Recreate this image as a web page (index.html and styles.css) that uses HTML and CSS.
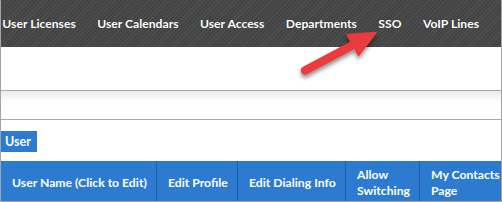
FILE: index.html
```html
<!DOCTYPE html>
<html>
<head>
<meta charset="utf-8">
<link rel="stylesheet" href="styles.css">
</head>
<body>
<div class="page">
  <div class="topbar">
    <nav class="nav">
      <span class="nav-item">Manage User Licenses</span>
      <span class="nav-item">User Calendars</span>
      <span class="nav-item">User Access</span>
      <span class="nav-item">Departments</span>
      <span class="nav-item">SSO</span>
      <span class="nav-item">VoIP Lines</span>
    </nav>
  </div>
  <div class="band"></div>
  <div class="band-shade"></div>
  <div class="content">
    <div class="tab">User</div>
    <div class="thead">
      <div class="th c1">User Name (Click to Edit)</div>
      <div class="th c2">Edit Profile</div>
      <div class="th c3">Edit Dialing Info</div>
      <div class="th c4">Allow<br>Switching</div>
      <div class="th c5">My Contacts<br>Page</div>
    </div>
  </div>
  <svg class="arrow" width="502" height="202" viewBox="0 0 502 202">
    <defs>
      <filter id="sh" x="-20%" y="-20%" width="140%" height="160%">
        <feDropShadow dx="0" dy="3" stdDeviation="2.2" flood-color="#000" flood-opacity="0.45"/>
      </filter>
    </defs>
    <g filter="url(#sh)" fill="#ea3a3e" stroke="#ea3a3e">
      <line x1="305" y1="70.5" x2="356" y2="43.5" stroke-width="8.5" stroke-linecap="round"/>
      <polygon points="376,32.5 358.5,55.5 347,34.5" stroke-width="1.5" stroke-linejoin="round"/>
    </g>
  </svg>
</div>
</body>
</html>
```

FILE: styles.css
```css
* { box-sizing: border-box; }
html, body { margin: 0; padding: 0; background: #fff; }
body { font-family: Lato, "Open Sans", sans-serif; }

.page {
  position: relative;
  width: 502px;
  height: 202px;
  overflow: hidden;
  border-left: 1px solid #a4a4a4;
  border-right: 1px solid #a4a4a4;
  border-bottom: 1px solid #a4a4a4;
}

.topbar {
  height: 47px;
  margin-left: -1px;
  margin-right: -1px;
  background-color: #474747;
  background-image: repeating-linear-gradient(-45deg, #4f4f4f 0, #4f4f4f 1px, #444 1px, #444 3px);
  display: flex;
  align-items: center;
  overflow: hidden;
}

.nav {
  display: flex;
  justify-content: flex-end;
  gap: 21.5px;
  width: 100%;
  padding-right: 23px;
  overflow: hidden;
}

.nav-item {
  flex-shrink: 0;
  white-space: nowrap;
  color: #fff;
  font-size: 12.15px;
  font-weight: 700;
  text-shadow: 0 0 1px rgba(0,0,0,0.4);
}

.band {
  height: 44px;
  border-bottom: 1px solid #a8a8a8;
}

.band-shade {
  height: 29px;
  border-bottom: 1px solid #a8a8a8;
  background: linear-gradient(#ebebeb, #fdfdfd 10px, #fff);
}

.content {
  padding-top: 10px;
}

.tab {
  display: inline-block;
  height: 21px;
  width: 36px;
  padding-left: 4px;
  background: #2c7bd0;
  color: #fff;
  font-size: 12.5px;
  font-weight: 700;
  line-height: 21px;
}

.thead {
  margin-top: 9px;
  height: 40px;
  display: flex;
  background: #2c7bd0;
}

.th {
  display: flex;
  align-items: center;
  padding: 3px 0 0 11px;
  color: #fff;
  font-size: 12.2px;
  font-weight: 700;
  line-height: 16px;
  border-right: 1px solid #1d5ea8;
  white-space: nowrap;
}
.c1 { width: 156px; }
.c2 { width: 81px; }
.c3 { width: 108px; }
.c4 { width: 74px; }
.c5 { flex: 1; border-right: none; }

.arrow {
  position: absolute;
  left: -1px;
  top: 0;
  pointer-events: none;
}
```
